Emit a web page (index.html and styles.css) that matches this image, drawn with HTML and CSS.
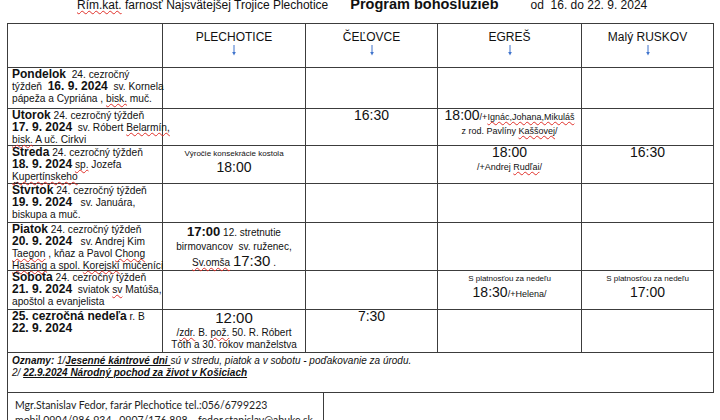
FILE: index.html
```html
<!DOCTYPE html>
<html lang="sk">
<head>
<meta charset="utf-8">
<title>Program bohoslužieb</title>
<link rel="stylesheet" href="styles.css">
</head>
<body>
<div class="title">
  <span class="parish"><span class="sp">Rím.kat.</span> farnosť Najsvätejšej Trojice Plechotice</span>
  <span class="prog">Program bohoslužieb</span>
  <span class="range">od&nbsp; 16. do 22. 9. 2024</span>
</div>

<div class="sched">
  <div class="cell"></div>
  <div class="cell head">PLECHOTICE<svg class="arr" width="6" height="11" viewBox="0 0 6 11"><line x1="3" y1="0" x2="3" y2="8" stroke="#3f73cc" stroke-width="1"/><polygon points="1.2,7 4.8,7 3,10.5" fill="#3f73cc"/></svg></div>
  <div class="cell head">ČEĽOVCE<svg class="arr" width="6" height="11" viewBox="0 0 6 11"><line x1="3" y1="0" x2="3" y2="8" stroke="#3f73cc" stroke-width="1"/><polygon points="1.2,7 4.8,7 3,10.5" fill="#3f73cc"/></svg></div>
  <div class="cell head">EGREŠ<svg class="arr" width="6" height="11" viewBox="0 0 6 11"><line x1="3" y1="0" x2="3" y2="8" stroke="#3f73cc" stroke-width="1"/><polygon points="1.2,7 4.8,7 3,10.5" fill="#3f73cc"/></svg></div>
  <div class="cell head">Malý RUSKOV<svg class="arr" width="6" height="11" viewBox="0 0 6 11"><line x1="3" y1="0" x2="3" y2="8" stroke="#3f73cc" stroke-width="1"/><polygon points="1.2,7 4.8,7 3,10.5" fill="#3f73cc"/></svg></div>

  <div class="cell day"><b>Pondelok</b>&nbsp; 24. cezročný<br>týždeň&nbsp; <b>16. 9. 2024</b>&nbsp; sv. Kornela<br>pápeža a Cypriána , <span class="sp">bisk.</span> muč.</div>
  <div class="cell"></div>
  <div class="cell"></div>
  <div class="cell"></div>
  <div class="cell"></div>

  <div class="cell day"><b>Utorok</b> 24. cezročný týždeň<br><b>17. 9. 2024</b>&nbsp; sv. Róbert <span class="sp">Belarmín,</span><br><span class="sp">bisk.</span> A uč. Cirkvi</div>
  <div class="cell"></div>
  <div class="cell mid"><span class="tm">16:30</span></div>
  <div class="cell mid"><span class="tm">18:00</span><span class="s9">/+<span class="sp">Ignác,Johana,Mikuláš</span></span><br><span class="s9">z rod. Pavlíny <span class="sp">Kaššovej</span>/</span></div>
  <div class="cell"></div>

  <div class="cell day"><b>Streda</b> 24. cezročný týždeň<br><b>18. 9. 2024</b> <span class="sp">sp.</span> Jozefa<br><span class="sp">Kupertínskeho</span></div>
  <div class="cell mid"><span class="s8 note">Výročie konsekrácie kostola</span><span class="tm">18:00</span></div>
  <div class="cell"></div>
  <div class="cell mid"><span class="tm">18:00</span><br><span class="s9">/+Andrej <span class="sp">Rudľai</span>/</span></div>
  <div class="cell mid"><span class="tm">16:30</span></div>

  <div class="cell day"><b>Štvrtok</b> 24. cezročný týždeň<br><b>19. 9. 2024</b>&nbsp;&nbsp; sv. Januára,<br>biskupa a muč.</div>
  <div class="cell"></div>
  <div class="cell"></div>
  <div class="cell"></div>
  <div class="cell"></div>

  <div class="cell day"><b>Piatok</b> 24. cezročný týždeň<br><b>20. 9. 2024</b>&nbsp;&nbsp; sv. Andrej Kim<br><span class="sp">Taegon</span> , kňaz a Pavol <span class="sp">Chong</span><br><span class="sp">Hasang</span> a spol. <span class="sp">Korejskí</span> mučeníci</div>
  <div class="cell mid fri"><b class="tb">17:00</b> 12. stretnutie<br>birmovancov&nbsp; sv. ruženec,<br><span class="sp">Sv.omša</span> <span class="tl">17:30</span> .</div>
  <div class="cell"></div>
  <div class="cell"></div>
  <div class="cell"></div>

  <div class="cell day"><b>Sobota</b> 24. cezročný týždeň<br><b>21. 9. 2024</b>&nbsp; sviatok <span class="sp">sv</span> Matúša,<br>apoštol a evanjelista</div>
  <div class="cell"></div>
  <div class="cell"></div>
  <div class="cell mid"><span class="s8 note">S platnosťou za nedeľu</span><span class="tm">18:30</span><span class="s9">/+Helena/</span></div>
  <div class="cell mid"><span class="s8 note">S platnosťou za nedeľu</span><span class="tm">17:00</span></div>

  <div class="cell day"><b>25. cezročná nedeľa</b> r. B<br><b>22. 9. 2024</b></div>
  <div class="cell mid sun"><span class="tl">12:00</span><br>/<span class="sp">zdr.</span> B. <span class="sp">pož.</span> 50. R. Róbert<br>Tóth a 30. rokov manželstva</div>
  <div class="cell mid"><span class="tm">7:30</span></div>
  <div class="cell"></div>
  <div class="cell"></div>

  <div class="cell notes"><b>Oznamy:</b> 1/<b class="u">Jesenné kántrové dni </b>sú v stredu, piatok a v sobotu - poďakovanie za úrodu.<br>2/ <b class="u">22.9.2024 Národný pochod za život v Košiciach</b></div>
</div>

<div class="footer">
  Mgr.Stanislav Fedor, farár Plechotice tel.:056/6799223<br>
  mobil 0904/986 934 , 0907/176 898 ,&nbsp; fedor.stanislav@abuke.sk
</div>
</body>
</html>
```

FILE: styles.css
```css
html, body {
  margin: 0;
  background: #ffffff;
  color: #111111;
  font-family: "Liberation Sans", Arial, sans-serif;
}

.title {
  display: flex;
  align-items: baseline;
  height: 26px;
  margin-top: -3px;
  padding-left: 77px;
  line-height: 14px;
  font-size: 12px;
  white-space: nowrap;
}

.prog {
  margin-left: 22px;
  font-size: 14.5px;
  font-weight: bold;
}

.range {
  margin-left: 32px;
  font-size: 12px;
}

.sp {
  text-decoration: underline wavy #e0302a;
  text-decoration-thickness: 1px;
  text-underline-offset: 1px;
  text-decoration-skip-ink: none;
}

.sched {
  display: grid;
  grid-template-columns: 155px 143px 132px 144px 132px;
  grid-template-rows: 44px 41px 37px 38px 39px 48px 39px 43px 40px;
  box-sizing: border-box;
  width: 707px;
  margin-left: 7px;
  border-left: 1px solid #3c3c3c;
  border-top: 1px solid #3c3c3c;
}

.cell {
  box-sizing: border-box;
  border-right: 1px solid #3c3c3c;
  border-bottom: 1px solid #3c3c3c;
  white-space: nowrap;
}

.head {
  display: flex;
  flex-direction: column;
  align-items: center;
  padding-top: 6px;
  font-size: 12px;
  line-height: 14px;
}

.arr {
  display: block;
  margin-top: 1px;
}

.day {
  padding: 1px 0 0 4px;
  font-size: 10.2px;
  line-height: 12px;
}

.day b {
  font-size: 12px;
  line-height: 0;
}

.mid {
  text-align: center;
  font-size: 10px;
  line-height: 13px;
}

.tm {
  font-size: 14px;
  line-height: 13px;
}

.tl {
  font-size: 15px;
  line-height: 14px;
}

.tb {
  font-size: 13px;
}

.s9 {
  font-size: 9px;
}

.s8 {
  font-size: 8px;
}

.note {
  display: block;
  line-height: 11px;
  padding-top: 2px;
}

.note + .tm {
  display: inline-block;
  line-height: 16px;
}

.fri {
  padding-top: 2px;
  line-height: 14px;
}

.sun {
  line-height: 12.5px;
  padding-top: 1px;
}

.notes {
  grid-column: 1 / -1;
  padding: 2px 0 0 4px;
  font-size: 10px;
  line-height: 12px;
  font-style: italic;
}

.notes .u {
  text-decoration: underline;
  text-underline-offset: 1px;
}

.footer {
  box-sizing: border-box;
  width: 317px;
  height: 40px;
  margin-left: 7px;
  padding: 5px 0 0 7px;
  border-left: 1px solid #3c3c3c;
  border-right: 1px solid #3c3c3c;
  font-family: Lato, "Open Sans", sans-serif;
  font-size: 10.5px;
  line-height: 15px;
  color: #222222;
  white-space: nowrap;
}
```
